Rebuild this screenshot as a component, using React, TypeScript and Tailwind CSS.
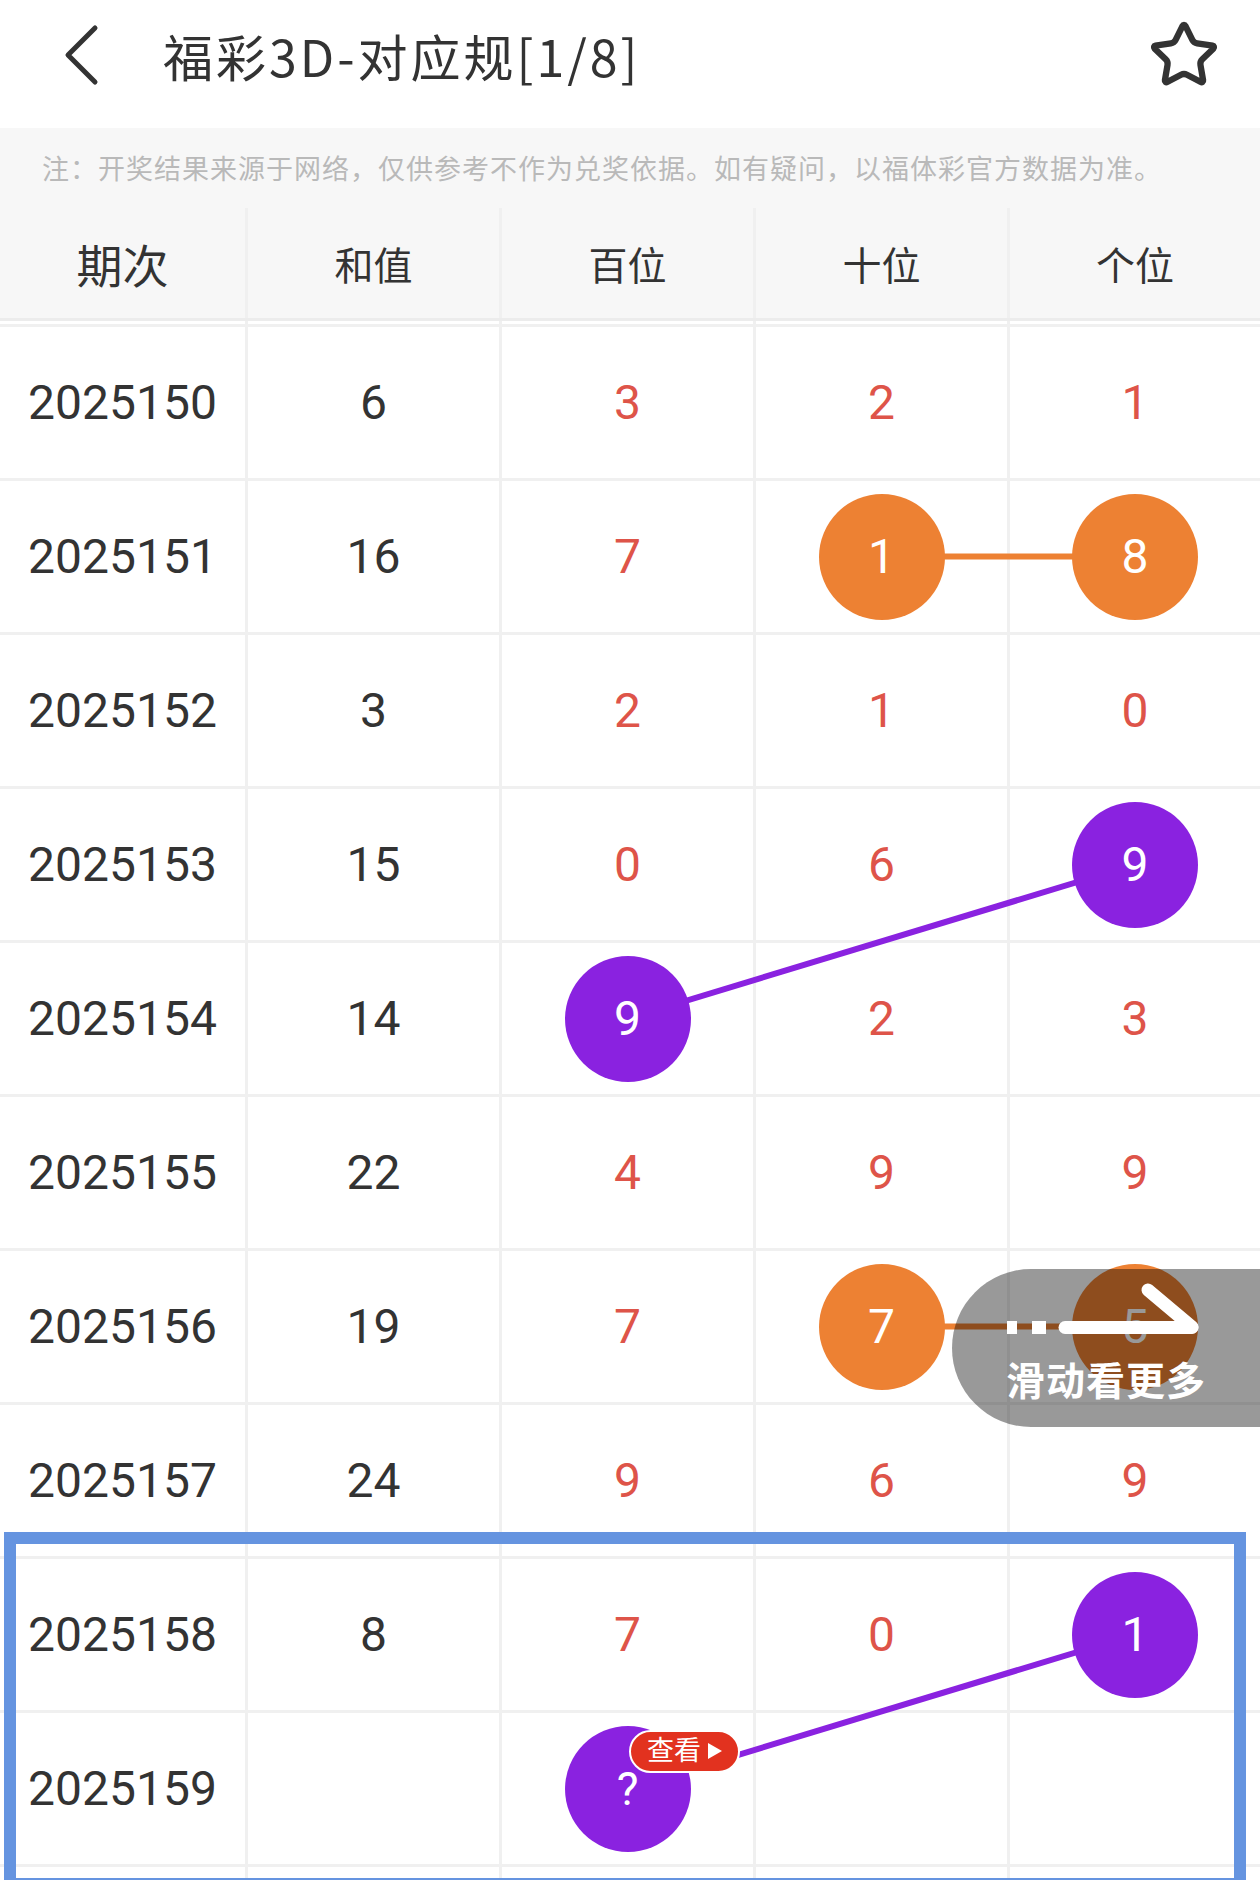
import { Star } from "lucide-react";

type Mark = "orange" | "purple";

type Cell = {
  v: string;
  mark?: Mark;
  badge?: boolean;
};

type Row = {
  issue: string;
  sum: string;
  cells: Cell[];
};

const rows: Row[] = [
  { issue: "2025150", sum: "6", cells: [{ v: "3" }, { v: "2" }, { v: "1" }] },
  { issue: "2025151", sum: "16", cells: [{ v: "7" }, { v: "1", mark: "orange" }, { v: "8", mark: "orange" }] },
  { issue: "2025152", sum: "3", cells: [{ v: "2" }, { v: "1" }, { v: "0" }] },
  { issue: "2025153", sum: "15", cells: [{ v: "0" }, { v: "6" }, { v: "9", mark: "purple" }] },
  { issue: "2025154", sum: "14", cells: [{ v: "9", mark: "purple" }, { v: "2" }, { v: "3" }] },
  { issue: "2025155", sum: "22", cells: [{ v: "4" }, { v: "9" }, { v: "9" }] },
  { issue: "2025156", sum: "19", cells: [{ v: "7" }, { v: "7", mark: "orange" }, { v: "5", mark: "orange" }] },
  { issue: "2025157", sum: "24", cells: [{ v: "9" }, { v: "6" }, { v: "9" }] },
  { issue: "2025158", sum: "8", cells: [{ v: "7" }, { v: "0" }, { v: "1", mark: "purple" }] },
  { issue: "2025159", sum: "", cells: [{ v: "?", mark: "purple", badge: true }, { v: "" }, { v: "" }] },
];

const markBg: Record<Mark, string> = {
  orange: "bg-[#ed8133]",
  purple: "bg-[#8a22e0]",
};

// column centres / row centres inside the body, used by the trend lines
const colX = [122.5, 373.5, 627.5, 881.5, 1135];
const ROW_H = 154;
const rowY = (i: number) => i * ROW_H + 75.5;

const links: { from: [number, number]; to: [number, number]; color: string }[] = [
  { from: [1, 3], to: [1, 4], color: "#ed8133" },
  { from: [3, 4], to: [4, 2], color: "#8a22e0" },
  { from: [6, 3], to: [6, 4], color: "#ed8133" },
  { from: [8, 4], to: [9, 2], color: "#8a22e0" },
];

const cellBase = "flex items-center justify-center border-r-[3px] border-[#f0f0f0]";

function Ball({ cell }: { cell: Cell }) {
  if (!cell.mark) {
    return <span className="text-[48px] leading-none text-[#de5449]">{cell.v}</span>;
  }
  return (
    <span
      className={`relative flex h-[126px] w-[126px] items-center justify-center rounded-full text-white ${markBg[cell.mark]} ${
        cell.v === "?" ? "text-[46px]" : "text-[48px]"
      } leading-none`}
    >
      {cell.v}
      {cell.badge && (
        <span className="absolute left-[64px] top-[4px] flex h-[43px] w-[111px] items-center justify-center gap-[6px] rounded-full border-2 border-white bg-[#e2321f] pl-[2px] text-[27px] leading-none text-white">
          查看
          <svg width="16" height="18" viewBox="0 0 16 18">
            <path d="M1 1 L15 9 L1 17 Z" fill="#fff" />
          </svg>
        </span>
      )}
    </span>
  );
}

export default function App() {
  return (
    <div className="min-h-screen w-[1260px] bg-white font-['Roboto','Noto_Sans_CJK_SC',sans-serif] text-[#333]">
      <header className="flex h-[128px] items-center pb-[18px] pl-[62px] pr-[40px]">
        <svg width="40" height="62" viewBox="0 0 40 62" fill="none">
          <polyline
            points="33,4 6,31 33,58"
            stroke="#333"
            strokeWidth="5"
            strokeLinecap="round"
            strokeLinejoin="round"
          />
        </svg>
        <h1 className="ml-[61px] flex-1 font-['Noto_Sans_CJK_SC',sans-serif] text-[50px] font-normal leading-none tracking-[3px]">
          福彩3D-对应规[1/8]
        </h1>
        <Star size={72} strokeWidth={2.1} color="#333" />
      </header>

      <div className="flex h-[80px] items-center bg-[#f7f7f7] pl-[42px] font-['Noto_Sans_CJK_SC',sans-serif] text-[27px] tracking-[1px] text-[#b9b9b9]">
        注：开奖结果来源于网络，仅供参考不作为兑奖依据。如有疑问，以福体彩官方数据为准。
      </div>

      <div className="grid h-[113px] grid-cols-[248px_254px_254px_254px_1fr] border-b-[3px] border-[#ececec] bg-[#f7f7f7] font-['Noto_Sans_CJK_SC',sans-serif]">
        <div className={`${cellBase} text-[46px] font-normal`}>期次</div>
        <div className={`${cellBase} text-[39px]`}>和值</div>
        <div className={`${cellBase} text-[39px]`}>百位</div>
        <div className={`${cellBase} text-[39px]`}>十位</div>
        <div className="flex items-center justify-center text-[39px]">个位</div>
      </div>
      <div className="grid h-[6px] grid-cols-[248px_254px_254px_254px_1fr] border-b-[3px] border-[#f0f0f0]">
        <div className={cellBase} />
        <div className={cellBase} />
        <div className={cellBase} />
        <div className={cellBase} />
        <div />
      </div>

      <div className="relative">
        <svg className="absolute left-0 top-0" width="1260" height={ROW_H * 11}>
          {links.map((l, i) => (
            <line
              key={i}
              x1={colX[l.from[1]]}
              y1={rowY(l.from[0])}
              x2={colX[l.to[1]]}
              y2={rowY(l.to[0])}
              stroke={l.color}
              strokeWidth="6"
            />
          ))}
        </svg>

        {rows.map((r) => (
          <div
            key={r.issue}
            className="grid h-[154px] grid-cols-[248px_254px_254px_254px_1fr] border-b-[3px] border-[#f0f0f0] text-[48px] leading-none"
          >
            <div className={cellBase}>{r.issue}</div>
            <div className={cellBase}>{r.sum}</div>
            <div className={cellBase}>
              <Ball cell={r.cells[0]} />
            </div>
            <div className={cellBase}>
              <Ball cell={r.cells[1]} />
            </div>
            <div className="flex items-center justify-center">
              <Ball cell={r.cells[2]} />
            </div>
          </div>
        ))}
        <div className="grid h-[154px] grid-cols-[248px_254px_254px_254px_1fr]">
          <div className={cellBase} />
          <div className={cellBase} />
          <div className={cellBase} />
          <div className={cellBase} />
          <div />
        </div>

        {/* swipe hint */}
        <div className="absolute left-[952px] top-[942px] z-20 flex h-[158px] w-[308px] flex-col items-center rounded-l-full bg-black/40 pt-[10px]">
          <svg width="200" height="60" viewBox="0 0 200 60" className="ml-[-6px]">
            <rect x="4" y="42" width="10" height="13" fill="#fff" />
            <rect x="29" y="42" width="14" height="13" fill="#fff" />
            <line x1="62" y1="48.5" x2="189" y2="48.5" stroke="#fff" strokeWidth="13" strokeLinecap="round" />
            <line x1="145" y1="11" x2="189" y2="48" stroke="#fff" strokeWidth="13" strokeLinecap="round" />
          </svg>
          <span className="mt-[20px] font-['Noto_Sans_CJK_SC',sans-serif] text-[39px] font-bold leading-none tracking-[1px] text-white">
            滑动看更多
          </span>
        </div>

        {/* highlight frame */}
        <div className="absolute left-[4px] top-[1205px] z-30 h-[358px] w-[1242px] border-[12px] border-[#6594e0]" />
      </div>
    </div>
  );
}
